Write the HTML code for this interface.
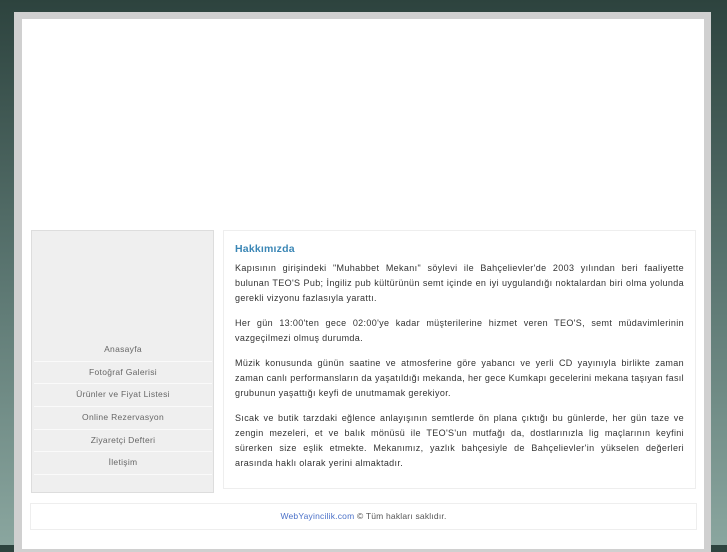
<!DOCTYPE html>
<html><head><meta charset="utf-8"><style>
html,body{margin:0;padding:0}
body{width:727px;height:545px;overflow:hidden;background:linear-gradient(#2d433e 0%,#5a7570 50%,#8aa69f 100%);font-family:"Liberation Sans",sans-serif;position:relative}
.frame{position:absolute;left:14px;top:12px;width:697px;height:540px;background:#d0d0d0}
.inner{position:absolute;left:22px;top:19px;width:682px;height:530px;background:#fff}
.side{position:absolute;left:31px;top:230px;width:181px;height:261px;background:#efefef;border:1px solid #ddd}
.menu{position:absolute;left:2px;top:108px;width:178px}
.menu div{height:21.7px;line-height:21.7px;text-align:center;font-size:8.5px;letter-spacing:0.3px;color:#666;background:#efefef;border-bottom:1px solid #fafafa}
.content{position:absolute;left:223px;top:230px;width:471px;height:257px;border:1px solid #eee;background:#fff}
h1{position:absolute;left:11px;top:12px;margin:0;font-size:10.5px;letter-spacing:0.2px;color:#3a86b5;font-weight:bold}
.txt{position:absolute;left:11px;top:30px;width:449px;font-size:9px;letter-spacing:0.35px;line-height:15px;color:#333;text-align:justify}
.txt p{margin:0 0 10px}
.foot{position:absolute;left:30px;top:503px;width:665px;height:25px;border:1px solid #eee;text-align:center;font-size:8.5px;letter-spacing:0.2px;line-height:25px;color:#555}
.foot a{color:#4a70c8;text-decoration:none}
</style></head><body>
<div class="frame"></div><div class="inner"></div>
<div class="side"><div class="menu">
<div>Anasayfa</div><div>Fotoğraf Galerisi</div><div>Ürünler ve Fiyat Listesi</div><div>Online Rezervasyon</div><div>Ziyaretçi Defteri</div><div>İletişim</div>
</div></div>
<div class="content"><h1>Hakkımızda</h1><div class="txt">
<p>Kapısının girişindeki "Muhabbet Mekanı" söylevi ile Bahçelievler'de 2003 yılından beri faaliyette bulunan TEO'S Pub; İngiliz pub kültürünün semt içinde en iyi uygulandığı noktalardan biri olma yolunda gerekli vizyonu fazlasıyla yarattı.</p>
<p>Her gün 13:00'ten gece 02:00'ye kadar müşterilerine hizmet veren TEO'S, semt müdavimlerinin vazgeçilmezi olmuş durumda.</p>
<p>Müzik konusunda günün saatine ve atmosferine göre yabancı ve yerli CD yayınıyla birlikte zaman zaman canlı performansların da yaşatıldığı mekanda, her gece Kumkapı gecelerini mekana taşıyan fasıl grubunun yaşattığı keyfi de unutmamak gerekiyor.</p>
<p>Sıcak ve butik tarzdaki eğlence anlayışının semtlerde ön plana çıktığı bu günlerde, her gün taze ve zengin mezeleri, et ve balık mönüsü ile TEO'S'un mutfağı da, dostlarınızla lig maçlarının keyfini sürerken size eşlik etmekte. Mekanımız, yazlık bahçesiyle de Bahçelievler'in yükselen değerleri arasında haklı olarak yerini almaktadır.</p>
</div></div>
<div class="foot"><a>WebYayincilik.com</a> © Tüm hakları saklıdır.</div>
</body></html>
